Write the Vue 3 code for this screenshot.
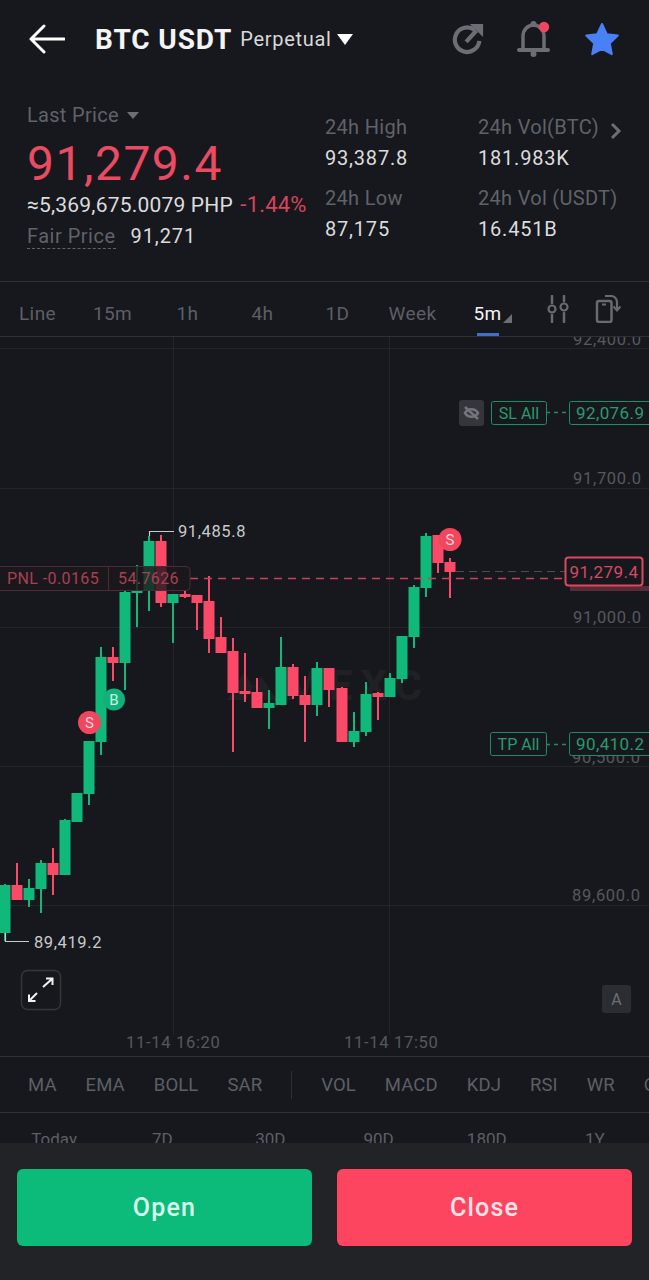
<template>
  <div class="page">
    <header class="topbar">
      <svg class="back" width="36" height="30" viewBox="0 0 36 30">
        <path d="M35 15H3M15 2L2 15l13 13" fill="none" stroke="#fff" stroke-width="3" stroke-linecap="round" stroke-linejoin="round" />
      </svg>
      <span class="pair">BTC USDT</span>
      <span class="kind">Perpetual</span>
      <span class="tri tri-white"></span>
      <div class="top-icons">
        <svg width="32" height="36" viewBox="0 0 34 38">
          <path d="M24 9.500A13 13 0 1 0 29 21" fill="none" stroke="#6b6e74" stroke-width="4.500" />
          <path d="M15 22L26 10" fill="none" stroke="#6b6e74" stroke-width="4.500" />
          <path d="M19 3h14v14z" fill="#6b6e74" />
        </svg>
        <svg width="36" height="38" viewBox="-2 0 36 38">
          <path d="M5 29V16a10.500 11 0 0 1 21 0v13" fill="none" stroke="#6b6e74" stroke-width="3.500" />
          <path d="M1 30h29" stroke="#6b6e74" stroke-width="4" stroke-linecap="round" />
          <circle cx="15.500" cy="34" r="3" fill="#6b6e74" />
          <circle cx="15.500" cy="4" r="3" fill="#6b6e74" />
          <circle cx="26" cy="7" r="5.200" fill="#f0475f" />
        </svg>
        <svg width="36" height="36" viewBox="0 0 36 36">
          <path d="M18 3l4.800 10.200 11 1.400-8 7.600 2 11L18 27.800 8.200 33.200l2-11-8-7.600 11-1.400z" fill="#4a80f5" stroke="#4a80f5" stroke-width="2" stroke-linejoin="round" />
        </svg>
      </div>
    </header>

    <section class="stats">
      <div class="last">
        <div class="last-label">Last Price <span class="tri tri-gray"></span></div>
        <div class="last-price">91,279.4</div>
        <div class="last-fiat">≈5,369,675.0079 PHP <span class="neg">-1.44%</span></div>
        <div class="fair"><span class="fair-label">Fair Price</span><span>91,271</span></div>
      </div>
      <div class="figures">
        <div class="figure" v-for="f in figures" :key="f.label">
          <div class="figure-label">{{ f.label }}</div>
          <div class="figure-value">{{ f.value }}</div>
        </div>
      </div>
      <svg class="chevron" width="14" height="20" viewBox="0 0 14 20">
        <path d="M3 3l7 7-7 7" fill="none" stroke="#6b6e74" stroke-width="3" />
      </svg>
    </section>

    <nav class="tabs">
      <span class="tab" v-for="t in tabs" :key="t">{{ t }}</span>
      <span class="tab tab-on">5m<i class="corner"></i></span>
      <div class="tab-icons">
        <svg width="24" height="28" viewBox="0 0 24 28">
          <path d="M6 1v7M6 20v7M18 1v5M18 18v9" stroke="#676a70" stroke-width="2.500" stroke-linecap="round" />
          <circle cx="6" cy="14" r="3.500" fill="none" stroke="#676a70" stroke-width="2.200" />
          <circle cx="18" cy="12" r="3.500" fill="none" stroke="#676a70" stroke-width="2.200" />
        </svg>
        <svg width="26" height="28" viewBox="0 0 26 28">
          <rect x="2" y="6" width="14.500" height="21" rx="2" fill="none" stroke="#676a70" stroke-width="2.500" />
          <path d="M7 9.500h4" stroke="#676a70" stroke-width="2" />
          <path d="M10 1h6a6 6 0 0 1 6 6v7" fill="none" stroke="#676a70" stroke-width="2.200" />
          <path d="M18.500 11.500l3.500 4 3.500-4" fill="none" stroke="#676a70" stroke-width="2" />
        </svg>
      </div>
    </nav>

    <div class="chart">
      <svg class="plot" width="649" height="719" viewBox="0 337 649 719">
        <g stroke="#232529" stroke-width="1">
          <path v-for="y in gridY" :key="y" :d="`M0 ${y + 0.5}H649`" />
          <path d="M173.500 337V1035M389.500 337V1035" />
        </g>

        <g class="watermark" fill="#1f2125">
          <path d="M227 700l17-28 10 16 7-12 16 24h-12l-11-15-8 15z" />
          <text x="284" y="700" font-size="42" font-weight="700" letter-spacing="8">MEXC</text>
        </g>

        <g class="axis">
          <text x="573" y="345">92,400.0</text>
          <text x="573" y="484">91,700.0</text>
          <text x="573" y="623">91,000.0</text>
          <text x="572" y="763">90,500.0</text>
          <text x="572" y="901">89,600.0</text>
          <text x="126" y="1048">11-14 16:20</text>
          <text x="344" y="1048">11-14 17:50</text>
        </g>

        <g v-for="c in candles" :key="c.x" :fill="c.up ? '#10b97a' : '#fb4a68'">
          <rect :x="c.x - 1" :y="c.hi" width="2" :height="c.lo - c.hi" />
          <rect :x="c.x - 5.500" :y="c.top" width="11" :height="c.bottom - c.top" />
        </g>

        <g class="extreme">
          <path d="M149.500 536V531.500H174M5.500 933V941.500H29" fill="none" stroke="#c9cacc" stroke-width="1.200" />
          <text x="178" y="537">91,485.8</text>
          <text x="34" y="948">89,419.2</text>
        </g>

        <path d="M456 571.500H565" stroke="#4b4d52" stroke-dasharray="8 5" />
        <path d="M190 578.500H565" stroke="#c8435a" stroke-width="1.500" stroke-dasharray="8 6" />

        <g class="pnl">
          <rect x="-4" y="566.500" width="194" height="24" rx="4" fill="#1b191e" fill-opacity="0.8" stroke="#4f2a34" />
          <path d="M108.500 567V590" stroke="#4f2a34" />
          <text x="7" y="584">PNL -0.0165</text>
          <text x="118" y="584">54.7626</text>
        </g>

        <rect x="570" y="586" width="79" height="5" fill="#5a2a36" />
        <g class="price-tag">
          <rect x="565.500" y="557.500" width="77" height="28" rx="3" fill="#17181d" stroke="#d9485f" stroke-width="2" />
          <text x="604" y="578" text-anchor="middle">91,279.4</text>
        </g>

        <g class="tag">
          <rect x="459" y="400" width="25" height="26" rx="3" fill="#34363c" />
          <g fill="none" stroke="#72757b" stroke-width="2.500">
            <path d="M465 413c3-5 10-5 13 0c-3 5-10 5-13 0z" />
            <path d="M465 407l13 12" />
          </g>

          <path d="M546 412.500H569M546 744.500H569" stroke="#1d8d64" stroke-width="1.500" stroke-dasharray="4 4" />
          <rect x="491.500" y="401.500" width="55" height="23" rx="2" fill="#17181d" stroke="#1d8d64" />
          <text class="tag-name" x="519" y="419" text-anchor="middle">SL All</text>
          <rect x="569.500" y="401.500" width="84" height="23" rx="2" fill="#17181d" stroke="#1d8d64" />
          <text x="576" y="419">92,076.9</text>
          <rect x="490.500" y="732.500" width="56" height="23" rx="2" fill="#17181d" stroke="#1d8d64" />
          <text class="tag-name" x="518.500" y="750" text-anchor="middle">TP All</text>
          <rect x="569.500" y="732.500" width="84" height="23" rx="2" fill="#17181d" stroke="#1d8d64" />
          <text x="576" y="750">90,410.2</text>
        </g>

        <g class="marker">
          <circle cx="89.500" cy="722.500" r="11.500" fill="#f0475f" />
          <text x="89.500" y="728" fill="#ffd3d9">S</text>
          <circle cx="114" cy="699.500" r="11" fill="#10b27a" />
          <text x="114" y="705" fill="#c9f5e3">B</text>
          <circle cx="450" cy="539.500" r="11.500" fill="#f0475f" />
          <text x="450" y="545" fill="#ffd3d9">S</text>
        </g>

        <rect x="21.500" y="970.500" width="39" height="39" rx="6" fill="#17181d" stroke="#34363b" stroke-width="1.500" />
        <path d="M43 987l9-8M46 978.500h6.500v6.500M37 993l-8 8M29 994.500v6.500h6.500" fill="none" stroke="#f2f2f2" stroke-width="2" />

        <rect x="602" y="985" width="29" height="28" rx="3" fill="#2b2d32" />
        <text class="auto" x="616.500" y="1005">A</text>
      </svg>
    </div>

    <div class="indicators">
      <span v-for="i in mainIndicators" :key="i">{{ i }}</span>
      <i class="divider"></i>
      <span v-for="i in subIndicators" :key="i">{{ i }}</span>
    </div>

    <div class="ranges">
      <span v-for="r in ranges" :key="r">{{ r }}</span>
    </div>

    <footer class="actions">
      <button class="btn btn-open">Open</button>
      <button class="btn btn-close">Close</button>
    </footer>
  </div>
</template>

<script setup>
const figures = [
  { label: '24h High', value: '93,387.8' },
  { label: '24h Vol(BTC)', value: '181.983K' },
  { label: '24h Low', value: '87,175' },
  { label: '24h Vol (USDT)', value: '16.451B' }
]
const tabs = ['Line', '15m', '1h', '4h', '1D', 'Week']
const mainIndicators = ['MA', 'EMA', 'BOLL', 'SAR']
const subIndicators = ['VOL', 'MACD', 'KDJ', 'RSI', 'WR', 'OBV']
const ranges = ['Today', '7D', '30D', '90D', '180D', '1Y']
const gridY = [348, 488, 627, 766, 905]

// x, body top, body bottom, wick top, wick bottom, green?
const rows = [
  [5, 885, 933, 884, 941, 1], [17, 885, 900, 863, 900, 0], [29, 888, 900, 879, 907, 1],
  [41, 863, 889, 860, 913, 1], [53, 863, 875, 848, 895, 0], [65, 820, 875, 819, 875, 1],
  [77, 793, 822, 793, 822, 1], [89, 741, 794, 741, 805, 1], [101, 657, 742, 647, 755, 1],
  [113, 657, 663, 647, 681, 0], [125, 592, 663, 590, 690, 1], [137, 590, 593, 565, 627, 1],
  [149, 541, 590, 536, 611, 1], [161, 541, 603, 535, 607, 0], [173, 594, 603, 594, 643, 1],
  [185, 594, 597, 590, 598, 0], [197, 595, 603, 595, 630, 0], [209, 601, 639, 576, 653, 0],
  [221, 637, 653, 617, 653, 0], [233, 651, 693, 638, 752, 0], [245, 691, 694, 653, 702, 0],
  [257, 692, 708, 678, 708, 0], [269, 703, 708, 690, 729, 1], [281, 667, 705, 637, 705, 1],
  [293, 667, 696, 664, 699, 0], [305, 695, 705, 676, 742, 0], [317, 668, 705, 662, 716, 1],
  [329, 668, 690, 668, 707, 0], [342, 688, 742, 687, 742, 0], [354, 731, 742, 712, 747, 1],
  [366, 694, 732, 682, 736, 1], [378, 693, 697, 692, 720, 0], [390, 678, 697, 673, 697, 1],
  [402, 636, 679, 636, 683, 1], [414, 587, 637, 585, 648, 1], [426, 536, 588, 533, 597, 1],
  [438, 535, 563, 535, 573, 0], [450, 562, 572, 558, 598, 0]
]
const candles = rows.map(([x, top, bottom, hi, lo, up]) => ({ x, top, bottom, hi, lo, up: !!up }))
</script>

<style>
html, body {
  background: #17181d;
}
</style>

<style scoped>
.page {
  width: 649px;
  height: 1280px;
  background: #17181d;
  font-family: Roboto, "Liberation Sans", sans-serif;
  display: flex;
  flex-direction: column;
  overflow: hidden;
}

.topbar {
  height: 78px;
  display: flex;
  align-items: center;
  padding-left: 29px;
}

.back {
  margin-right: 30px;
}

.pair {
  font-size: 28px;
  font-weight: 700;
  letter-spacing: 0.9px;
  color: #f4f4f4;
  margin-right: 8px;
}

.kind {
  font-size: 20px;
  letter-spacing: 0.7px;
  color: #d8d9db;
  margin-right: 5px;
}

.tri {
  display: inline-block;
  width: 0;
  height: 0;
  border-left: 8px solid transparent;
  border-right: 8px solid transparent;
  border-top: 11px solid #fff;
}

.tri-gray {
  border-left-width: 6px;
  border-right-width: 6px;
  border-top: 7px solid #6b6e74;
  margin: 0 0 3px 3px;
}

.top-icons {
  margin-left: auto;
  margin-right: 29px;
  display: flex;
  align-items: center;
  gap: 32px;
}

.stats {
  height: 204px;
  box-sizing: border-box;
  border-bottom: 1px solid #2e3035;
  padding-left: 27px;
  display: flex;
  position: relative;
}

.last {
  width: 298px;
  padding-top: 25px;
}

.last-label {
  font-size: 20px;
  line-height: 24px;
  color: #5f6269;
  letter-spacing: 0.3px;
}

.last-price {
  font-size: 48px;
  line-height: 56px;
  margin-top: 9px;
  color: #ea4b62;
  letter-spacing: 1.500px;
}

.last-fiat {
  font-size: 21px;
  line-height: 24px;
  margin-top: 1px;
  color: #dcdcde;
  white-space: nowrap;
  letter-spacing: 0.2px;
}

.neg {
  color: #d9435b;
  font-size: 22px;
  margin-left: 2px;
}

.fair {
  display: flex;
  gap: 15px;
  font-size: 20px;
  line-height: 24px;
  margin-top: 7px;
  color: #dcdcde;
  letter-spacing: 0.9px;
}

.fair-label {
  color: #5f6269;
  border-bottom: 1px dashed #5f6269;
  letter-spacing: 0.5px;
}

.figures {
  width: 300px;
  padding-top: 37px;
  display: grid;
  grid-template-columns: 153px 147px;
  grid-auto-rows: 71px;
}

.figure-label {
  font-size: 20px;
  line-height: 24px;
  color: #5f6269;
  white-space: nowrap;
  letter-spacing: 0.3px;
}

.figure-value {
  font-size: 20px;
  line-height: 24px;
  margin-top: 7px;
  color: #dcdcde;
  letter-spacing: 0.8px;
}

.chevron {
  position: absolute;
  left: 609px;
  top: 43px;
}

.tabs {
  height: 55px;
  box-sizing: border-box;
  border-bottom: 1px solid #2e3035;
  display: flex;
  align-items: center;
}

.tab {
  width: 75px;
  text-align: center;
  flex: none;
  font-size: 19px;
  color: #5c5f66;
  letter-spacing: 0.4px;
  position: relative;
  height: 54px;
  line-height: 63px;
  margin-top: -1px;
}

.tab-on {
  color: #f4f4f4;
}

.tab-on::after {
  content: "";
  position: absolute;
  left: 27px;
  bottom: 0;
  width: 22px;
  height: 3px;
  background: #3f6fd0;
}

.corner {
  position: absolute;
  left: 53px;
  top: 32px;
  width: 0;
  height: 0;
  border-left: 9px solid transparent;
  border-bottom: 9px solid #6b6e74;
}

.tab-icons {
  display: flex;
  align-items: center;
  gap: 25px;
  margin-left: 21px;
}

.chart {
  height: 720px;
  box-sizing: border-box;
  border-bottom: 1px solid #2e3035;
  flex: none;
}

.plot {
  display: block;
}

.axis text {
  font-size: 16.500px;
  fill: #55585e;
  letter-spacing: 0.7px;
}

.extreme text {
  font-size: 16.500px;
  fill: #c9cacc;
  letter-spacing: 0.6px;
}

.pnl text {
  font-size: 16px;
  fill: #a84053;
  letter-spacing: 0.4px;
}

.price-tag text {
  font-size: 17px;
  fill: #d44a60;
  letter-spacing: 0.5px;
}

.tag text {
  font-size: 17px;
  fill: #2a9a6e;
  letter-spacing: 0.4px;
}

.tag .tag-name {
  font-size: 16px;
  letter-spacing: 0;
}

.marker text {
  font-size: 15px;
  text-anchor: middle;
}

.auto {
  font-size: 16px;
  fill: #6b6e74;
  text-anchor: middle;
}

.indicators {
  height: 56px;
  box-sizing: border-box;
  border-bottom: 1px solid #2e3035;
  padding-left: 28px;
  display: flex;
  align-items: center;
  gap: 29px;
  font-size: 18.500px;
  letter-spacing: 0.1px;
  color: #5c5f66;
  white-space: nowrap;
  flex: none;
}

.divider {
  flex: none;
  width: 1px;
  height: 28px;
  background: #2e3035;
}

.ranges {
  height: 30px;
  flex: none;
  display: grid;
  grid-template-columns: repeat(6, 1fr);
  text-align: center;
  font-size: 17px;
  line-height: 53px;
  color: #5c5f66;
  overflow: hidden;
}

.actions {
  flex: 1;
  background: #212327;
  padding: 26px 17px 0;
  display: flex;
  gap: 25px;
}

.btn {
  flex: 1;
  height: 77px;
  border: none;
  border-radius: 6px;
  font-family: inherit;
  font-size: 25px;
  font-weight: 500;
  letter-spacing: 1.200px;
}

.btn-open {
  background: #0cba79;
  color: #d8fbee;
}

.btn-close {
  background: #fe4560;
  color: #ffe5e9;
}
</style>
